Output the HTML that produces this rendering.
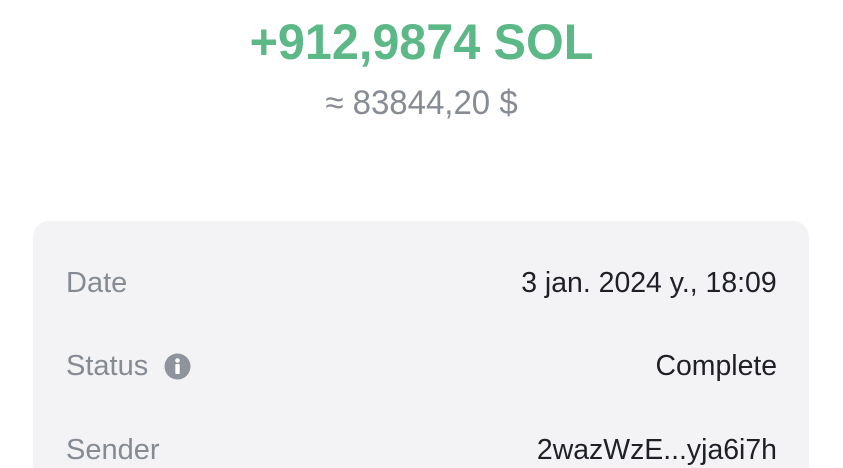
<!DOCTYPE html>
<html><head><meta charset="utf-8"><style>
html,body{margin:0;padding:0;background:#fff;width:843px;height:468px;overflow:hidden;font-family:"Liberation Sans",sans-serif;position:relative;}
.t{position:absolute;white-space:nowrap;line-height:1;}
#amt{left:0;width:843px;text-align:center;top:17px;font-size:50px;font-weight:bold;color:#5cb887;transform:scaleX(0.97);}
#usd{left:0;width:843px;text-align:center;top:86px;font-size:34px;color:#868b94;transform:scaleX(0.97);}
#card{position:absolute;left:33px;top:221px;width:776px;height:247px;background:#f3f3f6;border-radius:16px 16px 0 0;}
.l{left:66px;font-size:29px;color:#858a93;}
.v{right:66px;font-size:29px;color:#1e2026;transform-origin:right center;transform:scaleX(0.98);}
</style></head><body>
<div class="t" id="amt">+912,9874 SOL</div>
<div class="t" id="usd">≈ 83844,20 $</div>
<div id="card"></div>
<div class="t l" style="top:269px">Date</div>
<div class="t v" style="top:269px">3 jan. 2024 y., 18:09</div>
<div class="t l" style="top:352px">Status</div>
<svg style="position:absolute;left:164px;top:353px" width="27" height="27" viewBox="0 0 27 27"><circle cx="13.5" cy="13.5" r="13" fill="#8e939c"/><circle cx="13.5" cy="7.5" r="2.3" fill="#fff"/><rect x="11.3" y="11" width="4.4" height="10" rx="1" fill="#fff"/></svg>
<div class="t v" style="top:352px">Complete</div>
<div class="t l" style="top:436px;height:32px;overflow:hidden">Sender</div>
<div class="t v" style="top:436px;height:32px;overflow:hidden">2wazWzE...yja6i7h</div>
</body></html>
